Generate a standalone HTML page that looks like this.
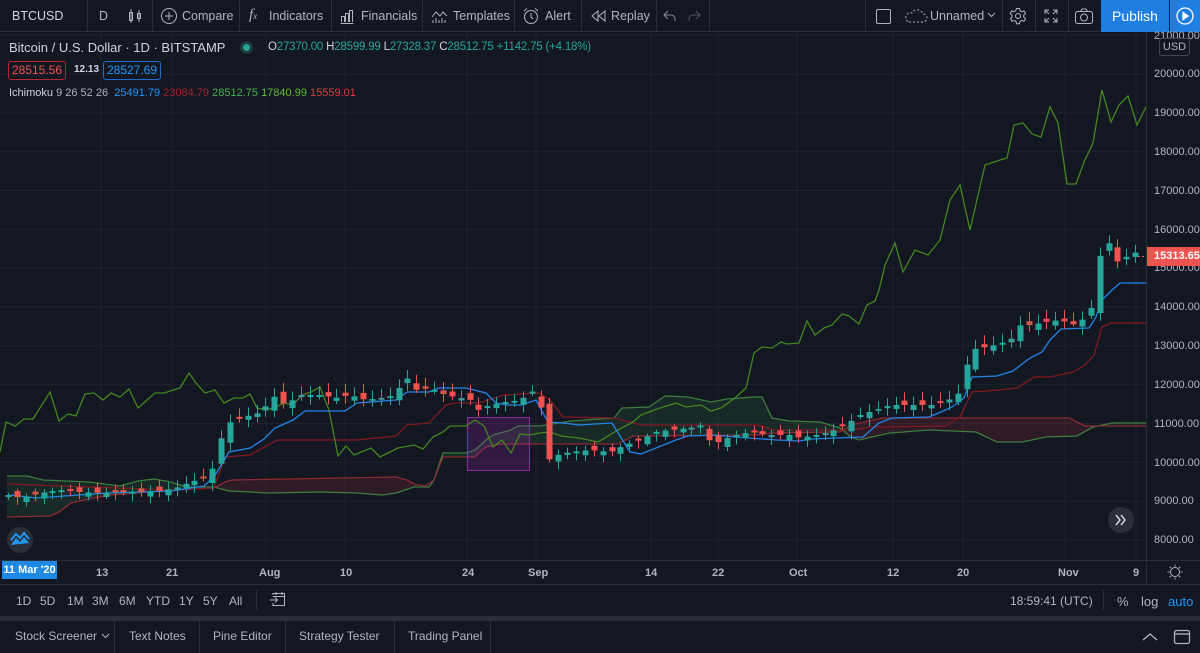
<!DOCTYPE html>
<html><head><meta charset="utf-8">
<style>
*{margin:0;padding:0;box-sizing:border-box}
html,body{width:1200px;height:653px;overflow:hidden;background:#131722;font-family:"Liberation Sans",sans-serif;color:#d1d4dc}
.abs{position:absolute}
.tb{position:absolute;top:0;left:0;width:1200px;height:32px;border-bottom:1px solid #2a2e39;background:#131722}
.t{position:absolute;top:9px;font-size:12.5px;color:#b2b5be;white-space:nowrap}
.sep{position:absolute;top:0;width:1px;height:32px;background:#2a2e39}
.lg{position:absolute;white-space:nowrap}
.pl{position:absolute;left:1154px;font-size:11px;color:#b2b5be}
.tl{position:absolute;top:567px;font-size:11px;color:#b2b5be;font-weight:bold}
.rb{position:absolute;top:594px;font-size:12px;color:#b2b5be}
.tab{position:absolute;top:629px;font-size:12px;color:#b2b5be}
.vs{position:absolute;top:621px;width:1px;height:32px;background:#2a2e39}
</style></head><body>
<svg id="ch" class="abs" style="left:0;top:0" width="1200" height="653"></svg>

<div class="tb">
 <div class="t" style="left:12px;color:#d1d4dc">BTCUSD</div>
 <div class="sep" style="left:87px"></div>
 <div class="t" style="left:99px">D</div>
 <svg class="abs" style="left:127px;top:8px" width="16" height="16" fill="none" stroke="#b2b5be" stroke-width="1"><rect x="2.5" y="4.5" width="3" height="8"/><line x1="4" y1="1" x2="4" y2="15"/><rect x="10.5" y="5.5" width="3" height="5"/><line x1="12" y1="2" x2="12" y2="14"/></svg>
 <div class="sep" style="left:152px"></div>
 <svg class="abs" style="left:160px;top:7px" width="18" height="18" fill="none" stroke="#b2b5be"><circle cx="9" cy="9" r="7.5"/><path d="M9 5v8M5 9h8"/></svg>
 <div class="t" style="left:182px">Compare</div>
 <div class="sep" style="left:239px"></div>
 <div class="t" style="left:249px;font-style:italic;font-family:'Liberation Serif',serif;font-size:15px;top:7px">f<span style="font-size:9px">x</span></div>
 <div class="t" style="left:269px">Indicators</div>
 <div class="sep" style="left:331px"></div>
 <svg class="abs" style="left:339px;top:8px" width="16" height="16" fill="none" stroke="#b2b5be"><path d="M1.5 15.5h13M2.5 14V8.5h3V14M6.5 14V5.5h3V14M10.5 14V2.5h3V14"/></svg>
 <div class="t" style="left:361px">Financials</div>
 <div class="sep" style="left:422px"></div>
 <svg class="abs" style="left:431px;top:8px" width="17" height="16" fill="none" stroke="#b2b5be"><path d="M1 9l4-5 4 4 3-4 4 4"/><path d="M2 12v3M5 10v5M8 12v3M11 10v5M14 12v3"/></svg>
 <div class="t" style="left:453px">Templates</div>
 <div class="sep" style="left:514px"></div>
 <svg class="abs" style="left:522px;top:7px" width="18" height="18" fill="none" stroke="#b2b5be"><circle cx="9" cy="10" r="6.5"/><path d="M9 6v4l2 2M2 4l3-2.5M16 4l-3-2.5"/></svg>
 <div class="t" style="left:545px">Alert</div>
 <div class="sep" style="left:581px"></div>
 <svg class="abs" style="left:590px;top:9px" width="16" height="14" fill="none" stroke="#b2b5be"><path d="M8 2L2 7l6 5zM15 2L9 7l6 5z"/></svg>
 <div class="t" style="left:611px">Replay</div>
 <div class="sep" style="left:656px"></div>
 <svg class="abs" style="left:662px;top:9px" width="40" height="14" fill="none" stroke="#8a8d96"><path d="M6 2L2 6l4 4M2 6h7a4 4 0 0 1 4 4v2"/><path stroke="#50535e" d="M34 2l4 4-4 4M38 6h-7a4 4 0 0 0-4 4v2"/></svg>
 <div class="sep" style="left:709px"></div>
 <div class="sep" style="left:865px"></div>
 <div class="abs" style="left:876px;top:9px;width:15px;height:15px;border:1.5px solid #b2b5be;border-radius:2px"></div>
 <svg class="abs" style="left:904px;top:9px" width="24" height="14" fill="none" stroke="#b2b5be" stroke-dasharray="2 2"><path d="M5 13h14a4 4 0 0 0 0-8 6 6 0 0 0-11-1A4.5 4.5 0 0 0 5 13z"/></svg>
 <div class="t" style="left:930px">Unnamed</div>
 <svg class="abs" style="left:987px;top:12px" width="9" height="6" fill="none" stroke="#b2b5be"><path d="M1 1l3.5 3.5L8 1"/></svg>
 <div class="sep" style="left:1002px"></div>
 <svg class="abs" style="left:1009px;top:7px" width="18" height="18" fill="none" stroke="#b2b5be"><circle cx="9" cy="9" r="2.5"/><path d="M7.5 1.5h3l.5 2.3 1.8 1 2.2-.8 1.5 2.6-1.8 1.5v2l1.8 1.5-1.5 2.6-2.2-.8-1.8 1-.5 2.3h-3l-.5-2.3-1.8-1-2.2.8-1.5-2.6L3 10V8L1.2 6.5 2.7 3.9l2.2.8 1.8-1z"/></svg>
 <div class="sep" style="left:1035px"></div>
 <svg class="abs" style="left:1043px;top:8px" width="16" height="16" fill="none" stroke="#b2b5be"><path d="M2 6V2h4M2 2l4 4M14 6V2h-4M14 2l-4 4M2 10v4h4M2 14l4-4M14 10v4h-4M14 14l-4-4"/></svg>
 <div class="sep" style="left:1068px"></div>
 <svg class="abs" style="left:1074px;top:7px" width="20" height="18" fill="none" stroke="#b2b5be"><rect x="1.5" y="4.5" width="17" height="12" rx="2"/><path d="M6.5 4.5l1.5-2.5h4l1.5 2.5"/><circle cx="10" cy="10.5" r="3.5"/></svg>
 <div class="abs" style="left:1101px;top:0;width:68px;height:32px;background:#1f7fe0;color:#fff;font-size:14px;text-align:center;line-height:32px">Publish</div>
 <div class="abs" style="left:1170px;top:0;width:30px;height:32px;background:#1f7fe0"></div>
 <svg class="abs" style="left:1175px;top:6px" width="20" height="20" fill="none" stroke="#fff" stroke-width="1.3"><circle cx="10" cy="10" r="8"/><path d="M8 6.5v7l5-3.5z" fill="#fff"/></svg>
</div>

<div class="lg" style="left:9px;top:40px;font-size:13px;color:#d1d4dc">Bitcoin / U.S. Dollar · 1D · BITSTAMP</div>
<div class="abs" style="left:240px;top:41px;width:13px;height:13px;border-radius:50%;background:#1c3a39"></div>
<div class="abs" style="left:243px;top:44px;width:7px;height:7px;border-radius:50%;background:#26a69a"></div>
<div class="lg" style="left:268px;top:41px;font-size:11.5px;color:#26a69a;letter-spacing:-0.2px"><span style="color:#d1d4dc">O</span>27370.00 <span style="color:#d1d4dc">H</span>28599.99 <span style="color:#d1d4dc">L</span>27328.37 <span style="color:#d1d4dc">C</span>28512.75 +1142.75 (+4.18%)</div>
<div class="abs" style="left:8px;top:61px;width:58px;height:19px;border:1px solid #b22833;border-radius:3px;font-size:12px;color:#ef5350;text-align:center;line-height:17px">28515.56</div>
<div class="lg" style="left:74px;top:64px;font-size:10px;color:#d1d4dc;font-weight:bold">12.13</div>
<div class="abs" style="left:103px;top:61px;width:58px;height:19px;border:1px solid #1e6fd0;border-radius:3px;font-size:12px;color:#2196f3;text-align:center;line-height:17px">28527.69</div>
<div class="lg" style="left:9px;top:87px;font-size:11px;color:#b2b5be"><span style="color:#d1d4dc">Ichimoku</span> 9 26 52 26 &nbsp;<span style="color:#2196f3">25491.79</span> <span style="color:#a3232d">23084.79</span> <span style="color:#4caf50">28512.75</span> <span style="color:#66bb3a">17840.99</span> <span style="color:#f23645">15559.01</span></div>

<div class="abs" style="left:1146px;top:32px;width:1px;height:553px;background:#2a2e39"></div>
<div class="pl" style="top:30px">21000.00</div>
<div class="abs" style="left:1159px;top:38px;width:31px;height:18px;border:1px solid #434651;border-radius:3px;background:#131722;font-size:11px;color:#b2b5be;text-align:center;line-height:16px">USD</div>
<div class="pl" style="top:68px">20000.00</div>
<div class="pl" style="top:107px">19000.00</div>
<div class="pl" style="top:146px">18000.00</div>
<div class="pl" style="top:185px">17000.00</div>
<div class="pl" style="top:224px">16000.00</div>
<div class="pl" style="top:262px">15000.00</div>
<div class="pl" style="top:301px">14000.00</div>
<div class="pl" style="top:340px">13000.00</div>
<div class="pl" style="top:379px">12000.00</div>
<div class="pl" style="top:418px">11000.00</div>
<div class="pl" style="top:457px">10000.00</div>
<div class="pl" style="top:495px">9000.00</div>
<div class="pl" style="top:534px">8000.00</div>
<div class="abs" style="left:1147px;top:247px;width:53px;height:19px;background:#ef5350;color:#fff;font-size:11px;font-weight:bold;line-height:19px;padding-left:7px">15313.65</div>

<div class="abs" style="left:0;top:560px;width:1200px;height:1px;background:#2a2e39"></div>
<div class="abs" style="left:2px;top:561px;width:55px;height:18px;background:#1e88e5;color:#fff;font-size:11px;font-weight:bold;line-height:18px;text-align:center">11 Mar '20</div>
<div class="tl" style="left:96px">13</div>
<div class="tl" style="left:166px">21</div>
<div class="tl" style="left:259px">Aug</div>
<div class="tl" style="left:340px">10</div>
<div class="tl" style="left:462px">24</div>
<div class="tl" style="left:528px">Sep</div>
<div class="tl" style="left:645px">14</div>
<div class="tl" style="left:712px">22</div>
<div class="tl" style="left:789px">Oct</div>
<div class="tl" style="left:887px">12</div>
<div class="tl" style="left:957px">20</div>
<div class="tl" style="left:1058px">Nov</div>
<div class="tl" style="left:1133px">9</div>
<svg class="abs" style="left:1166px;top:563px" width="18" height="18" fill="none" stroke="#b2b5be"><circle cx="9" cy="9" r="4.5"/><path d="M9 1.5v2M9 14.5v2M1.5 9h2M14.5 9h2M3.7 3.7l1.4 1.4M12.9 12.9l1.4 1.4M3.7 14.3l1.4-1.4M12.9 5.1l1.4-1.4"/></svg>

<div class="abs" style="left:0;top:584px;width:1200px;height:1px;background:#2a2e39"></div>
<div class="rb" style="left:16px">1D</div><div class="rb" style="left:40px">5D</div><div class="rb" style="left:67px">1M</div><div class="rb" style="left:92px">3M</div><div class="rb" style="left:119px">6M</div><div class="rb" style="left:146px">YTD</div><div class="rb" style="left:179px">1Y</div><div class="rb" style="left:203px">5Y</div><div class="rb" style="left:229px">All</div>
<div class="abs" style="left:256px;top:590px;width:1px;height:20px;background:#2a2e39"></div>
<svg class="abs" style="left:269px;top:591px" width="18" height="16" fill="none" stroke="#b2b5be"><path d="M4 4V2.5h11.5v12H4V12M4 5.5h11.5M7 1v3M13 1v3M1 9h7M6 6.5L8.5 9 6 11.5"/></svg>
<div class="rb" style="left:1010px;color:#b2b5be">18:59:41 (UTC)</div>
<div class="abs" style="left:1103px;top:590px;width:1px;height:20px;background:#2a2e39"></div>
<div class="rb" style="left:1117px;font-size:13px">%</div>
<div class="rb" style="left:1141px;font-size:13px">log</div>
<div class="rb" style="left:1168px;font-size:13px;color:#2196f3">auto</div>

<div class="abs" style="left:0;top:616px;width:1200px;height:5px;background:#2a2e39"></div>
<div class="tab" style="left:15px">Stock Screener</div>
<svg class="abs" style="left:101px;top:633px" width="9" height="6" fill="none" stroke="#b2b5be"><path d="M1 1l3.5 3.5L8 1"/></svg>
<div class="vs" style="left:114px"></div>
<div class="tab" style="left:129px">Text Notes</div>
<div class="vs" style="left:199px"></div>
<div class="tab" style="left:213px">Pine Editor</div>
<div class="vs" style="left:285px"></div>
<div class="tab" style="left:299px">Strategy Tester</div>
<div class="vs" style="left:394px"></div>
<div class="tab" style="left:408px">Trading Panel</div>
<div class="vs" style="left:490px"></div>
<svg class="abs" style="left:1141px;top:628px" width="60" height="18" fill="none" stroke="#b2b5be" stroke-width="1.3"><path d="M2 12l7-6 7 6"/><rect x="33.5" y="2.5" width="15" height="13" rx="2"/><path d="M33.5 6h15"/></svg>

<script>
(function(){
var s=document.getElementById('ch'),h='';
[101,172,266,345,467,536,651,718,797,893,963,1065,1136].forEach(function(x){h+='<line x1="'+x+'" y1="32" x2="'+x+'" y2="560" stroke="#1e222d"/>';});
for(var k=0;k<14;k++){var yy=540-k*38.83;h+='<line x1="0" y1="'+yy+'" x2="1146" y2="'+yy+'" stroke="#1e222d"/>';}
function interp(p,x){if(x<=p[0][0])return p[0][1];for(var i=1;i<p.length;i++){if(x<=p[i][0]){var a=p[i-1],b=p[i];return a[1]+(b[1]-a[1])*(x-a[0])/(b[0]-a[0]);}}return p[p.length-1][1];}
function pl(p,c,w){return '<polyline fill="none" stroke="'+c+'" stroke-width="'+(w||1.3)+'" points="'+p.map(function(q){return q.join(',')}).join(' ')+'"/>';}
var A=[[7,476],[27,476],[43,480],[89,482],[120,486],[138,481],[154,479],[171,482],[186,487],[214,487],[229,491],[250,492],[268,493],[321,492],[357,493],[382,495],[396,493],[414,487],[429,487],[434,480],[443,453],[466,453],[475,450],[486,440],[493,435],[511,430],[518,426],[540,426],[571,421],[614,418],[622,408],[649,407],[665,396],[688,397],[711,402],[727,399],[754,397],[762,397],[772,418],[789,421],[820,422],[840,428],[851,437],[859,440],[890,433],[929,430],[976,432],[997,442],[1022,442],[1046,437],[1077,436],[1093,427],[1112,423],[1146,423]];
var B=[[7,517],[50,516],[59,512],[71,503],[93,498],[111,495],[175,490],[214,488],[225,482],[232,480],[396,477],[407,480],[414,484],[425,486],[434,480],[443,457],[475,457],[479,453],[486,447],[500,444],[618,444],[633,436],[758,435],[773,433],[840,432],[851,425],[882,418],[1069,418],[1085,426],[1146,426]];
var g1=[],g2=[],r1=[],r2=[];
for(var x=7;x<=1146;x+=2){var a=interp(A,x),b=interp(B,x),m=Math.max(a,b);g1.push([x,a]);g2.unshift([x,m]);r1.push([x,b]);r2.unshift([x,m]);}
h+='<polygon fill="rgba(76,175,80,0.12)" points="'+g1.concat(g2).map(function(q){return q.join(',')}).join(' ')+'"/>';
h+='<polygon fill="rgba(242,54,69,0.13)" points="'+r1.concat(r2).map(function(q){return q.join(',')}).join(' ')+'"/>';
h+=pl(A,'#3f7d3f');h+=pl(B,'#8c2a32');
h+='<rect x="467.5" y="417.5" width="62" height="53" fill="rgba(156,39,176,0.22)" stroke="#8e2a9e"/>';
var K=[[7,484],[171,490],[214,488],[225,457],[250,455],[277,440],[357,440],[396,436],[407,425],[429,423],[446,405],[454,403],[475,403],[482,402],[504,395],[539,393],[550,400],[563,417],[614,418],[641,425],[758,425],[773,430],[851,430],[871,427],[945,426],[960,417],[972,392],[999,390],[1017,388],[1034,377],[1050,377],[1073,372],[1085,365],[1094,355],[1102,327],[1112,323],[1146,323]];
h+=pl(K,'#801922');
var C=[[0,452],[6,422],[15,426],[24,419],[33,419],[50,392],[59,421],[68,414],[76,416],[85,394],[94,393],[103,400],[111,393],[120,397],[129,389],[138,408],[155,393],[164,393],[180,388],[189,373],[196,383],[205,393],[215,390],[224,403],[234,398],[243,398],[250,394],[257,408],[267,410],[276,407],[284,403],[293,405],[302,395],[311,392],[320,387],[329,410],[338,456],[346,446],[354,455],[371,448],[380,457],[398,448],[414,445],[423,449],[433,437],[443,432],[450,426],[466,426],[475,420],[484,426],[493,447],[502,440],[511,453],[520,434],[529,435],[540,433],[550,432],[561,436],[579,438],[598,442],[618,430],[633,422],[641,415],[657,409],[676,403],[686,407],[701,405],[711,411],[721,408],[735,398],[746,388],[754,353],[762,347],[772,348],[781,342],[787,344],[799,343],[807,321],[815,335],[824,328],[832,325],[842,314],[849,316],[859,324],[867,305],[875,301],[879,290],[885,265],[895,243],[903,272],[915,250],[928,255],[940,240],[950,200],[960,185],[970,230],[985,165],[1000,160],[1007,158],[1014,125],[1023,123],[1032,134],[1041,137],[1050,107],[1058,123],[1067,184],[1076,184],[1084,162],[1093,143],[1102,90],[1111,122],[1119,105],[1128,96],[1137,125],[1146,107]];
h+=pl(C,'#43861f');
var T=[[11,495],[36,498],[107,493],[171,491],[204,486],[214,477],[223,462],[229,452],[250,448],[264,439],[275,428],[293,420],[305,411],[345,411],[357,403],[396,400],[407,392],[429,392],[439,388],[466,388],[486,393],[496,403],[507,405],[521,405],[536,400],[548,422],[563,423],[579,425],[612,423],[630,452],[641,454],[676,440],[688,436],[715,435],[735,437],[777,440],[799,441],[812,439],[836,438],[863,437],[879,423],[892,418],[929,417],[941,412],[952,407],[964,398],[972,377],[997,376],[1013,371],[1030,358],[1042,352],[1050,340],[1061,329],[1089,328],[1096,317],[1102,300],[1112,290],[1120,283],[1146,283]];
h+=pl(T,'#2186e8');
var P=[[8,495],[20,498],[40,493],[60,490],[80,492],[100,493],[120,492],[140,492],[160,491],[175,488],[190,482],[205,478],[215,465],[224,425],[235,420],[250,415],[262,412],[272,395],[285,405],[300,395],[310,395],[320,395],[335,398],[350,395],[365,400],[380,398],[395,395],[405,375],[415,390],[430,388],[445,395],[460,398],[470,400],[478,410],[490,405],[505,402],[520,400],[530,392],[538,390],[548,460],[558,455],[570,452],[590,450],[610,452],[625,445],[640,440],[655,432],[670,430],[690,428],[700,425],[712,445],[722,440],[735,435],[750,432],[770,435],[790,435],[800,438],[815,435],[830,432],[845,425],[860,415],[875,410],[890,405],[905,405],[920,405],[935,405],[948,400],[960,392],[970,350],[980,348],[995,345],[1010,340],[1020,325],[1030,325],[1045,322],[1060,320],[1075,325],[1088,315],[1094,300],[1101,245],[1110,243],[1120,268],[1130,250],[1140,255]];
var st=8.875,n=0;
for(var cx0=8;cx0<=1141;cx0+=st){n++;var c=interp(P,cx0),o=interp(P,cx0-st)+Math.sin(n*2.7)*5;
 if(Math.abs(c-o)<1.5)o=c+(Math.sin(n*1.3)>0?2:-2);
 var up=c<o,col=up?'#26a69a':'#ef5350',bt=Math.min(c,o),bb=Math.max(c,o);
 var wt=bt-2-Math.abs(Math.sin(n*3.1))*7,wb=bb+2+Math.abs(Math.cos(n*1.7))*6,cx=Math.round(cx0)+0.5;
 h+='<line x1="'+cx+'" y1="'+wt.toFixed(1)+'" x2="'+cx+'" y2="'+wb.toFixed(1)+'" stroke="'+col+'"/>';
 h+='<rect x="'+(cx-3)+'" y="'+bt.toFixed(1)+'" width="6" height="'+Math.max(1,bb-bt).toFixed(1)+'" fill="'+col+'"/>';}
h+='<line x1="1138" y1="256.5" x2="1146" y2="256.5" stroke="#ef5350" stroke-dasharray="2 2"/>';
h+='<circle cx="20" cy="540" r="13" fill="#2a2e39"/><path d="M11 545l5-7 4 4 4-5 5 6z" fill="#2196f3"/><path d="M11 540l5-6 4 4 4-5 5 6" fill="none" stroke="#2196f3" stroke-width="2"/>';
h+='<circle cx="1121" cy="520" r="13" fill="#2a2e39"/><path d="M1116 515l4 5-4 5M1121 515l4 5-4 5" fill="none" stroke="#d1d4dc" stroke-width="1.5"/>';
s.innerHTML=h;
})();
</script>
</body></html>
